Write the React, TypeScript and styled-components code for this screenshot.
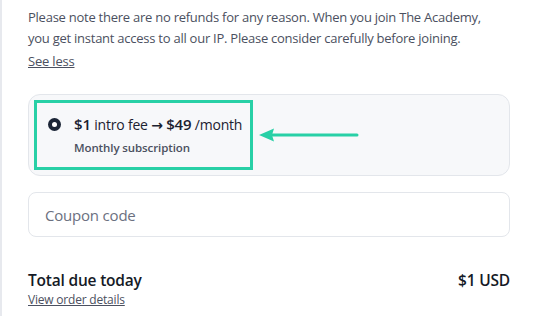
import React from "react";
import styled, { createGlobalStyle } from "styled-components";

const Global = createGlobalStyle`
  html, body { margin: 0; padding: 0; background: #ffffff; }
  body { font-family: "Open Sans", "Noto Sans", sans-serif; }
`;

const Page = styled.div`
  width: 538px;
  height: 316px;
  box-sizing: border-box;
  border-left: 2px solid #e7e9ee;
  padding: 7px 28px 0 26px;
  overflow: hidden;
  display: flex;
  flex-direction: column;
`;

const Notice = styled.p`
  margin: 0;
  max-width: 470px;
  font-size: 13px;
  line-height: 21px;
  color: #4b5060;
  letter-spacing: -0.25px;
`;

const TextLink = styled.a<{ $size?: number }>`
  display: block;
  margin-top: ${(p) => (p.$size ? 0 : 3)}px;
  font-size: ${(p) => p.$size ?? 13}px;
  line-height: 18px;
  color: #4b5060;
  text-decoration: underline;
  letter-spacing: -0.2px;
  width: max-content;
`;

const PlanCard = styled.div`
  margin-top: 24px;
  height: 82px;
  box-sizing: border-box;
  border: 1px solid #e3e6eb;
  border-radius: 12px;
  background: #f7f8fa;
  padding: 6px 5px;
  display: flex;
  align-items: center;
  gap: 6px;
`;

const Highlight = styled.div`
  width: 219px;
  height: 70px;
  box-sizing: border-box;
  border: 3px solid #28d0a6;
  padding: 10px 0 0 11px;
  display: flex;
  gap: 13px;
`;

const Radio = styled.span`
  margin-top: 5px;
  width: 13px;
  height: 13px;
  border-radius: 50%;
  background: #1b2536;
  display: flex;
  align-items: center;
  justify-content: center;
  flex-shrink: 0;
  &::after {
    content: "";
    width: 5px;
    height: 5px;
    border-radius: 50%;
    background: #fff;
  }
`;

const PlanText = styled.div`
  display: flex;
  flex-direction: column;
`;

const PriceLine = styled.div`
  font-size: 14px;
  line-height: 22px;
  color: #1b2130;
  white-space: nowrap;
  letter-spacing: -0.2px;
`;

const Price = styled.span`
  font-size: 15px;
  font-weight: 600;
`;

const ArrowGlyph = styled.span`
  font-family: "DejaVu Sans", sans-serif;
  font-weight: 700;
  font-size: 14px;
`;

const Sub = styled.div`
  margin-top: 4px;
  font-size: 11.5px;
  font-weight: 600;
  color: #4b5060;
  letter-spacing: -0.1px;
`;

const CouponInput = styled.input`
  margin-top: 16px;
  height: 45px;
  box-sizing: border-box;
  width: 100%;
  border: 1px solid #e3e6eb;
  border-radius: 8px;
  padding: 0 16px;
  font-family: inherit;
  font-size: 15px;
  color: #1b2130;
  background: #fff;
  outline: none;
  letter-spacing: -0.2px;
  &::placeholder { color: #6b7080; }
`;

const TotalRow = styled.div`
  margin-top: 32px;
  display: flex;
  justify-content: space-between;
  align-items: center;
  font-size: 15.5px;
  font-weight: 600;
  color: #151a26;
  line-height: 22px;
  letter-spacing: -0.2px;
`;

const Arrow = () => (
  <svg width="100" height="16" viewBox="0 0 100 16">
    <line x1="10" y1="8" x2="98" y2="8" stroke="#28d0a6" strokeWidth="3" strokeLinecap="round" />
    <polygon points="0,8 15,1.5 13,8 15,14.5" fill="#28d0a6" />
  </svg>
);

export default function App() {
  return (
    <>
      <Global />
      <Page>
        <Notice>
          Please note there are no refunds for any reason. When you join The Academy,
          you get instant access to all our IP. Please consider carefully before joining.
        </Notice>
        <TextLink href="#">See less</TextLink>
        <PlanCard>
          <Highlight>
            <Radio />
            <PlanText>
              <PriceLine>
                <Price>$1</Price> intro fee <ArrowGlyph>→</ArrowGlyph> <Price>$49</Price> /month
              </PriceLine>
              <Sub>Monthly subscription</Sub>
            </PlanText>
          </Highlight>
          <Arrow />
        </PlanCard>
        <CouponInput placeholder="Coupon code" />
        <TotalRow>
          <span>Total due today</span>
          <span>$1 USD</span>
        </TotalRow>
        <TextLink href="#" $size={12}>View order details</TextLink>
      </Page>
    </>
  );
}
